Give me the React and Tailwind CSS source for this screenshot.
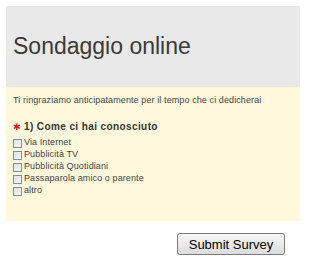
import React from "react";

const options = [
  "Via Internet",
  "Pubblicità TV",
  "Pubblicità Quotidiani",
  "Passaparola amico o parente",
  "altro",
];

export default function App() {
  return (
    <div className="w-[300px] h-[261px] bg-white pt-[6px] pl-[6px] overflow-hidden font-['Liberation_Sans',Arial,sans-serif]">
      <div className="h-[81px] bg-[#e9e9e9] flex items-center pl-[7px]">
        <h1 className="text-[23px] leading-none text-[#3a3a3a]">Sondaggio online</h1>
      </div>

      <div className="h-[134px] bg-[#fef8dc] pl-[7px] pt-[7px]">
        <p className="text-[9px] leading-[12px] tracking-[0.1px] text-[#444]">
          Ti ringraziamo anticipatamente per il tempo che ci dedicherai
        </p>

        <div className="mt-[15px] h-[12px] flex items-center text-[10px] font-bold tracking-[0.4px] text-[#333]">
          <span className="text-[#d42020] text-[9px] leading-none mr-[3px] font-['DejaVu_Sans',sans-serif]">✱</span>
          <span className="leading-[12px]">1) Come ci hai conosciuto</span>
        </div>

        <div className="mt-[4px]">
          {options.map((opt) => (
            <label key={opt} className="h-[12px] flex items-center text-[9px] tracking-[0.1px] text-[#444]">
              <span className="w-[9px] h-[9px] border border-[#7f8ea3] bg-gradient-to-br from-[#dde3ea] to-[#f7f8fa] mr-[2px] shrink-0" />
              {opt}
            </label>
          ))}
        </div>
      </div>

      <div className="flex justify-end pr-[15px] mt-[12px]">
        <button
          type="button"
          className="w-[108px] h-[22px] text-[13px] leading-none text-black border border-[#7a7a7a] rounded-[3px] bg-gradient-to-b from-[#f8f8f8] to-[#dcdcdc]"
        >
          Submit Survey
        </button>
      </div>
    </div>
  );
}
